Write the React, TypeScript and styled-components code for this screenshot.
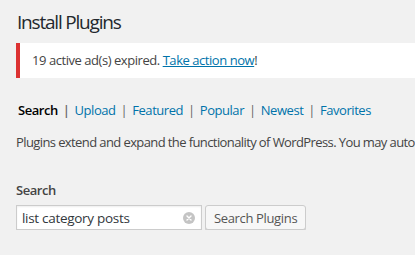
import styled, { createGlobalStyle } from 'styled-components'

const GlobalStyle = createGlobalStyle`
  html, body {
    margin: 0;
    padding: 0;
    background: #f1f1f1;
    overflow: hidden;
  }
  body {
    font-family: "Open Sans", "Liberation Sans", sans-serif;
    font-size: 13px;
    letter-spacing: -0.45px;
    color: #444;
  }
`

const Wrap = styled.div`
  padding: 9px 0 0 16px;
  width: 415px;
  box-sizing: border-box;
`

const Title = styled.h1`
  margin: 0 0 0 1px;
  font-size: 19px;
  line-height: 26px;
  font-weight: 400;
  letter-spacing: -1.2px;
  color: #23282d;
`

const Notice = styled.div`
  margin-top: 8px;
  background: #fff;
  border-left: 4px solid #dc3232;
  padding: 8px 12px;
  line-height: 19px;
  color: #444;
`

const Link = styled.a`
  color: #0073aa;
  text-decoration: underline;
`

const Tabs = styled.ul`
  list-style: none;
  margin: 22px 0 0 2px;
  padding: 0;
  display: flex;
  line-height: 20px;
  white-space: nowrap;
`

const Tab = styled.li<{ $current?: boolean }>`
  color: ${p => (p.$current ? '#000' : '#0073aa')};
  font-weight: ${p => (p.$current ? 600 : 400)};
`

const Sep = styled.span`
  color: #666;
  margin: 0 5px 0 5px;
`

const Intro = styled.p`
  margin: 12px 0 0;
  line-height: 20px;
  letter-spacing: -0.6px;
  white-space: nowrap;
  overflow: hidden;
`

const Label = styled.div`
  margin-top: 28px;
  font-weight: 600;
  font-size: 13px;
  line-height: 20px;
  color: #444;
`

const SearchRow = styled.div`
  margin-top: 5px;
  display: flex;
  gap: 3px;
`

const InputBox = styled.div`
  width: 186px;
  height: 25px;
  box-sizing: border-box;
  background: #fff;
  border: 1px solid #ccc;
  box-shadow: inset 0 1px 2px rgba(0, 0, 0, 0.07);
  display: flex;
  align-items: center;
  padding: 0 6px 0 5px;
`

const InputText = styled.span`
  flex: 1;
  font-size: 13.5px;
  letter-spacing: -0.3px;
  color: #32373c;
`

const ClearIcon = styled.span`
  width: 12px;
  height: 12px;
  border-radius: 50%;
  background: #c4c4c4;
  display: flex;
  align-items: center;
  justify-content: center;
`

const Button = styled.button`
  height: 25px;
  width: 101px;
  box-sizing: border-box;
  padding: 0 8px;
  background: #f7f7f7;
  border: 1px solid #ccc;
  border-radius: 3px;
  box-shadow: 0 1px 0 #ccc;
  font-family: "Open Sans", "Liberation Sans", sans-serif;
  font-size: 13px;
  letter-spacing: -0.35px;
  color: #555;
  white-space: nowrap;
`

export default function App() {
  const tabs = ['Search', 'Upload', 'Featured', 'Popular', 'Newest', 'Favorites']
  return (
    <Wrap>
      <GlobalStyle />
      <Title>Install Plugins</Title>
      <Notice>
        19 active ad(s) expired. <Link href="#">Take action now</Link>!
      </Notice>
      <Tabs>
        {tabs.map((t, i) => (
          <Tab key={t} $current={i === 0}>
            {t}
            {i < tabs.length - 1 && <Sep>|</Sep>}
          </Tab>
        ))}
      </Tabs>
      <Intro>
        Plugins extend and expand the functionality of WordPress. You may automatically install plugins from the WordPress Plugin Directory.
      </Intro>
      <Label>Search</Label>
      <SearchRow>
        <InputBox>
          <InputText>list category posts</InputText>
          <ClearIcon>
            <svg width="6" height="6" viewBox="0 0 6 6">
              <path d="M1 1L5 5M5 1L1 5" stroke="#fff" strokeWidth="1.4" strokeLinecap="round" />
            </svg>
          </ClearIcon>
        </InputBox>
        <Button>Search Plugins</Button>
      </SearchRow>
    </Wrap>
  )
}
